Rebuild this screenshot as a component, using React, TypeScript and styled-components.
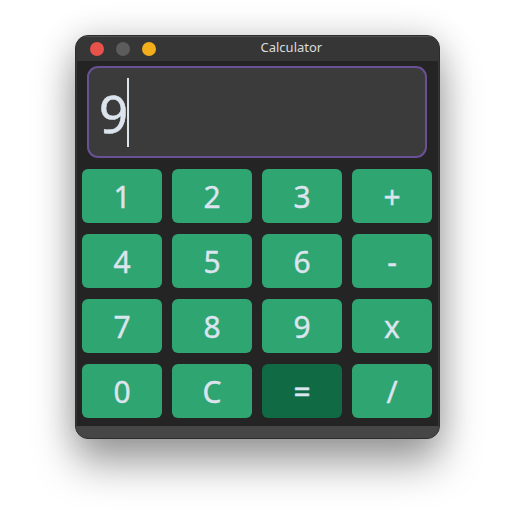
import React from "react";
import styled, { createGlobalStyle } from "styled-components";

const GlobalStyle = createGlobalStyle`
  body {
    margin: 0;
    background: #ffffff;
    font-family: "Noto Sans", sans-serif;
  }
`;

const Desktop = styled.main`
  box-sizing: border-box;
  width: 515px;
  height: 524px;
  padding: 35px 75px 0;
  overflow: hidden;
`;

const Window = styled.section`
  box-sizing: border-box;
  display: flex;
  flex-direction: column;
  width: 365px;
  height: 404px;
  border: 1px solid #2d2d2d;
  border-radius: 13px;
  background: #363636;
  overflow: hidden;
  box-shadow: 0 25px 42px rgba(0, 0, 0, 0.36), 0 0 34px rgba(0, 0, 0, 0.16);
`;

const TitleBar = styled.header`
  box-sizing: border-box;
  display: grid;
  grid-template-columns: 150px 1fr;
  height: 25px;
  flex: none;
  border-top: 1px solid #505050;
  background: #363636;
`;

const Controls = styled.div`
  display: flex;
  gap: 12px;
  padding: 5px 0 0 14px;
`;

const Control = styled.span<{ $color: string }>`
  width: 14px;
  height: 14px;
  border-radius: 50%;
  background: ${({ $color }) => $color};
`;

const Title = styled.h1`
  margin: 0 0 0 34.5px;
  font-size: 13px;
  font-weight: 400;
  line-height: 21px;
  color: #dcdcdc;
`;

const Body = styled.div`
  box-sizing: border-box;
  height: 365px;
  flex: none;
  margin: 0 1px;
  padding: 5px 5px 0;
  background: #242424;
`;

const Display = styled.div`
  box-sizing: border-box;
  display: flex;
  width: 340px;
  height: 92px;
  margin: 0 5px 11px;
  padding: 10px 0 0 10px;
  border: 2px solid #6a5196;
  border-radius: 11px;
  background: #3b3b3b;
  color: #dce4ee;
  font-size: 51px;
  line-height: 70px;
  -webkit-text-stroke: 0.5px #dce4ee;
`;

const Caret = styled.span`
  width: 2px;
  height: 69px;
  margin-left: -1px;
  background: #dce4ee;
`;

const Keypad = styled.div`
  display: grid;
  grid-template-columns: repeat(4, 80px);
  grid-auto-rows: 54px;
  gap: 11px 10px;
`;

const Key = styled.button<{ $active: boolean }>`
  padding: 1px 0 0;
  border: 0;
  border-radius: 6px;
  background: ${({ $active }) => ($active ? "#106a43" : "#2fa572")};
  color: #dce4ee;
  font-family: inherit;
  font-size: 30px;
  line-height: 41px;
  -webkit-text-stroke: 0.4px #dce4ee;
`;

const Footer = styled.footer`
  flex: 1;
  background: #464646;
`;

const controls = ["#e9524a", "#5c5c5c", "#f2ae1b"];
const keys = ["1", "2", "3", "+", "4", "5", "6", "-", "7", "8", "9", "x", "0", "C", "=", "/"];

export default function App() {
  return (
    <>
      <GlobalStyle />
      <Desktop>
        <Window>
          <TitleBar>
            <Controls>
              {controls.map((color) => (
                <Control key={color} $color={color} />
              ))}
            </Controls>
            <Title>Calculator</Title>
          </TitleBar>
          <Body>
            <Display>
              9<Caret />
            </Display>
            <Keypad>
              {keys.map((label) => (
                <Key key={label} $active={label === "="}>
                  {label}
                </Key>
              ))}
            </Keypad>
          </Body>
          <Footer />
        </Window>
      </Desktop>
    </>
  );
}
